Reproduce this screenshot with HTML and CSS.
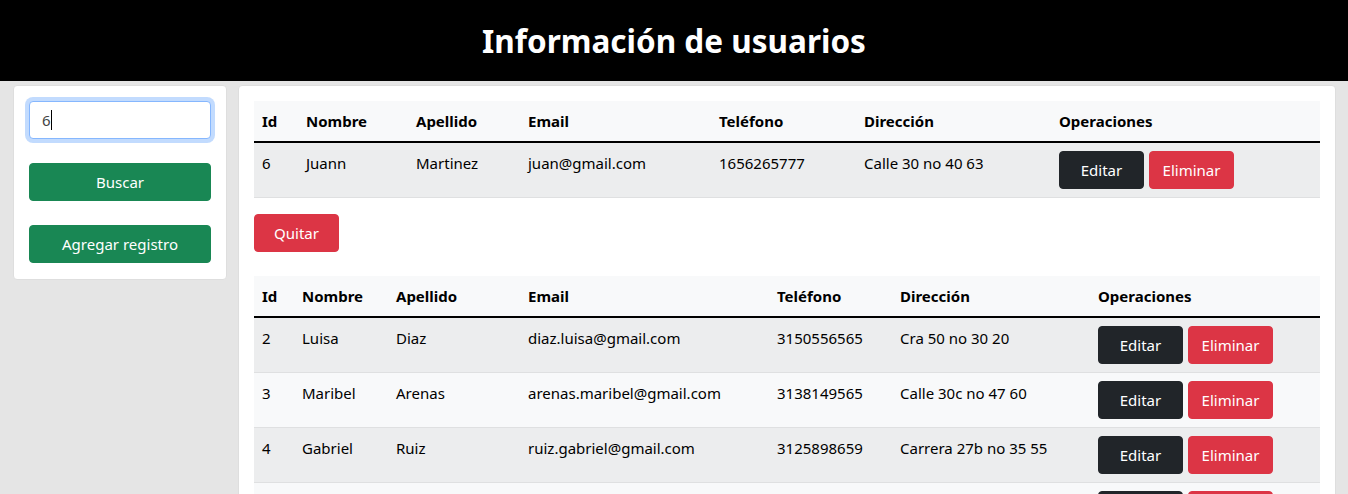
FILE: index.html
```html
<!DOCTYPE html>
<html lang="es">
<head>
<meta charset="utf-8">
<title>Información de usuarios</title>
<link rel="stylesheet" href="styles.css">
</head>
<body>
<header class="topbar">
  <h1 class="title">Información de usuarios</h1>
</header>
<div class="layout">
  <aside class="card side">
    <div class="field field-focus"><span class="field-text">6</span><span class="caret"></span></div>
    <button class="btn btn-green btn-block">Buscar</button>
    <button class="btn btn-green btn-block">Agregar registro</button>
  </aside>
  <main class="card content">
    <table class="grid grid-result">
      <thead>
        <tr><th>Id</th><th>Nombre</th><th>Apellido</th><th>Email</th><th>Teléfono</th><th>Dirección</th><th>Operaciones</th></tr>
      </thead>
      <tbody>
        <tr class="odd"><td>6</td><td>Juann</td><td>Martinez</td><td>juan@gmail.com</td><td>1656265777</td><td>Calle 30 no 40 63</td><td><div class="ops"><button class="btn btn-dark">Editar</button><button class="btn btn-red">Eliminar</button></div></td></tr>
      </tbody>
    </table>
    <button class="btn btn-red btn-quit">Quitar</button>
    <table class="grid grid-all">
      <thead>
        <tr><th>Id</th><th>Nombre</th><th>Apellido</th><th>Email</th><th>Teléfono</th><th>Dirección</th><th>Operaciones</th></tr>
      </thead>
      <tbody>
        <tr class="odd"><td>2</td><td>Luisa</td><td>Diaz</td><td>diaz.luisa@gmail.com</td><td>3150556565</td><td>Cra 50 no 30 20</td><td><div class="ops"><button class="btn btn-dark">Editar</button><button class="btn btn-red">Eliminar</button></div></td></tr>
        <tr><td>3</td><td>Maribel</td><td>Arenas</td><td>arenas.maribel@gmail.com</td><td>3138149565</td><td>Calle 30c no 47 60</td><td><div class="ops"><button class="btn btn-dark">Editar</button><button class="btn btn-red">Eliminar</button></div></td></tr>
        <tr class="odd"><td>4</td><td>Gabriel</td><td>Ruiz</td><td>ruiz.gabriel@gmail.com</td><td>3125898659</td><td>Carrera 27b no 35 55</td><td><div class="ops"><button class="btn btn-dark">Editar</button><button class="btn btn-red">Eliminar</button></div></td></tr>
        <tr><td></td><td></td><td></td><td></td><td></td><td></td><td><div class="ops"><button class="btn btn-dark" aria-label="Editar"></button><button class="btn btn-red" aria-label="Eliminar"></button></div></td></tr>
      </tbody>
    </table>
  </main>
</div>
</body>
</html>
```
FILE: styles.css
```css
* { box-sizing: border-box; }
html, body { margin: 0; padding: 0; }
body {
  background: #e5e5e5;
  font-family: "Noto Sans", "Open Sans", sans-serif;
  font-size: 15px;
  line-height: 24px;
  color: #212529;
  height: 494px;
  overflow: hidden;
}
.topbar {
  background: #000;
  height: 81px;
  display: flex;
  align-items: center;
  justify-content: center;
}
.title {
  margin: 0;
  color: #fff;
  font-size: 31.5px;
  font-weight: 700;
  line-height: 40px;
  padding-top: 1px;
}
.layout {
  display: flex;
  align-items: flex-start;
  gap: 11px;
  padding: 4px 12px 0 13px;
}
.card {
  background: #fff;
  border: 1px solid #dedede;
  border-radius: 4px;
  padding: 15px;
}
.side {
  width: 214px;
  flex: none;
  display: flex;
  flex-direction: column;
  gap: 24px;
  padding-bottom: 16px;
}
.content {
  flex: 1;
  min-width: 0;
  height: 420px;
}
.field {
  height: 38px;
  border: 1px solid #ced4da;
  border-radius: 4px;
  padding: 6px 12px;
  display: flex;
  align-items: center;
  color: #212529;
  background: #fff;
}
.field-focus {
  border-color: #86b7fe;
  box-shadow: 0 0 0 4px rgba(13, 110, 253, 0.25);
}
.field-text { color: #444; }
.caret {
  display: inline-block;
  width: 1px;
  height: 20px;
  background: #000;
}
.btn {
  font-family: inherit;
  font-size: 15px;
  line-height: 24px;
  padding: 6px 12px;
  height: 38px;
  border: 1px solid transparent;
  border-radius: 4px;
  color: #fff;
  cursor: pointer;
  white-space: nowrap;
}
.btn-block { width: 100%; }
.btn-green { background: #198754; border-color: #198754; }
.btn-red { background: #dc3545; border-color: #dc3545; }
.btn-dark { background: #212529; border-color: #212529; }
.ops .btn, .btn-quit { width: 85px; padding: 6px 0; }
.ops { display: flex; gap: 5px; }
.btn-quit { display: block; margin-bottom: 24px; }
.grid {
  width: 100%;
  table-layout: fixed;
  border-collapse: separate;
  border-spacing: 0;
  background: #f8f9fa;
  color: #000;
  margin-bottom: 16px;
}
.grid th, .grid td {
  padding: 8px;
  text-align: left;
  vertical-align: top;
  border-bottom: 1px solid #dfe0e1;
  white-space: nowrap;
}
.grid th {
  font-weight: 700;
  border-bottom: 2px solid #000;
}
.grid tr.odd td { background: #ecedee; }
.grid-result th:nth-child(1) { width: 44px; }
.grid-result th:nth-child(2) { width: 110px; }
.grid-result th:nth-child(3) { width: 112px; }
.grid-result th:nth-child(4) { width: 191px; }
.grid-result th:nth-child(5) { width: 145px; }
.grid-result th:nth-child(6) { width: 195px; }
.grid-all th:nth-child(1) { width: 40px; }
.grid-all th:nth-child(2) { width: 94px; }
.grid-all th:nth-child(3) { width: 132px; }
.grid-all th:nth-child(4) { width: 249px; }
.grid-all th:nth-child(5) { width: 123px; }
.grid-all th:nth-child(6) { width: 198px; }
```
